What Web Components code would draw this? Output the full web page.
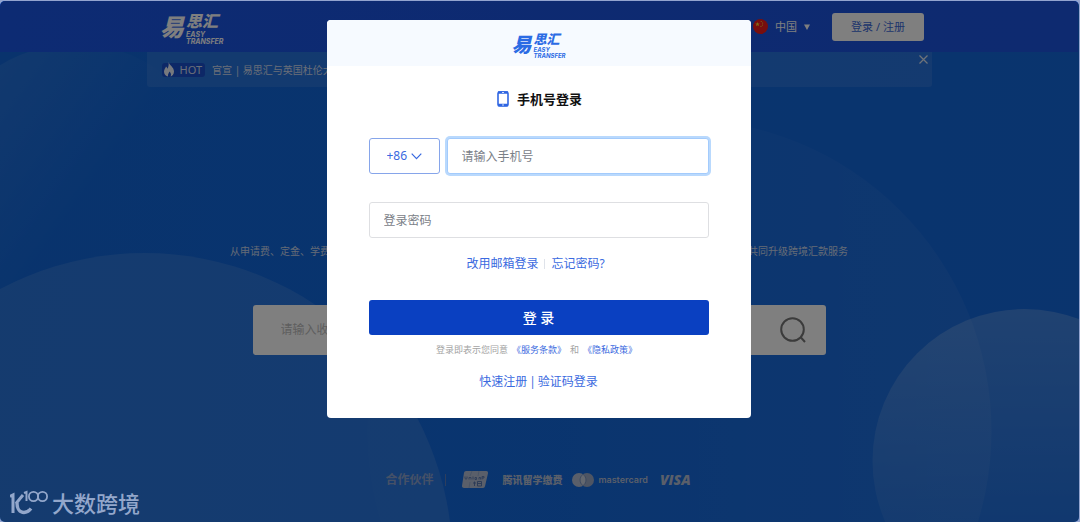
<!DOCTYPE html>
<html lang="zh-CN">
<head>
<meta charset="utf-8">
<meta name="viewport" content="width=device-width, initial-scale=1">
<title>易思汇 - 登录</title>
<style>
  html, body { margin: 0; min-height: 100%; }
  body {
    background: #93a4cf;
    font-family: "Noto Sans", "Noto Sans CJK SC", sans-serif;
    font-size: 12px;
    line-height: 16px;
  }
</style>
</head>
<body>
<et-app></et-app>

<script>
const define = (name, html, setup) => {
  const template = document.createElement('template');
  template.innerHTML = `<style>
    *, *::before, *::after { box-sizing: border-box; }
    a { color: inherit; text-decoration: none; }
    button, input, select { font: inherit; color: inherit; margin: 0; }
    svg { display: block; flex: none; }
  </style>` + html;
  customElements.define(name, class extends HTMLElement {
    constructor() {
      super();
      this.attachShadow({ mode: 'open' }).append(template.content.cloneNode(true));
    }
    connectedCallback() { if (setup) setup(this, this.shadowRoot); }
  });
};

/* Brand mark; --big, --mid and --tiny set its three text sizes */
define('et-logo', `
  <style>
    :host { display: block; color: var(--logo, #fff); }
    .mark { display: flex; align-items: center; gap: 2px; font-style: italic; font-weight: 900; }
    .big { font-size: var(--big, 24px); line-height: var(--h, 32px); }
    .col { display: flex; flex-direction: column; }
    .mid { font: italic 900 var(--mid, 16px)/var(--mid-line, 22px) "Noto Sans CJK SC", sans-serif; }
    .tiny { font: italic 700 var(--tiny, 7px)/var(--tiny, 7px) Inter, sans-serif; }
  </style>
  <div class="mark">
    <span class="big">易</span>
    <div class="col"><span class="mid">思汇</span><span class="tiny">EASY</span><span class="tiny">TRANSFER</span></div>
  </div>`);

define('et-header', `
  <style>
    :host { display: block; background: linear-gradient(90deg, #1b56e6, #1c54e0); color: #fff; }
    .bar { display: flex; align-items: center; height: 51px; max-width: 770px; margin: 0 auto; padding-left: 6px; }
    nav { margin-left: auto; display: flex; align-items: center; }
    .lang { display: flex; align-items: center; gap: 7px; font-size: 11px; margin-right: 22px; }
    select { appearance: none; border: 0; background: none; padding: 0; line-height: 16px; }
    button { width: 92px; height: 28px; border: 0; border-radius: 3px; background: #fff; color: #3a68d8; font-size: 11px; padding: 0; }
  </style>
  <div class="bar">
    <et-logo></et-logo>
    <nav>
      <div class="lang">
        <svg width="15" height="15" viewBox="0 0 15 15"><circle cx="7.500" cy="7.500" r="7.500" fill="#f01c1c"/><path d="M4.500 3l.6 1.500 1.600.1-1.200 1 .4 1.600-1.400-.9-1.400.9.4-1.600-1.200-1 1.600-.1z" fill="#ffd92e"/><g fill="#ffd92e"><circle cx="8.200" cy="2.500" r=".6"/><circle cx="9.600" cy="4" r=".6"/><circle cx="9.500" cy="6" r=".6"/><circle cx="8" cy="7.300" r=".6"/></g></svg>
        <select aria-label="国家"><option>中国</option></select>
        <svg width="6" height="6" viewBox="0 0 6 6"><path d="M0 .5h6L3 6z" fill="#fff"/></svg>
      </div>
      <button type="button">登录 / 注册</button>
    </nav>
  </div>`);

define('et-notice', `
  <style>
    :host { display: block; width: 100%; max-width: 785px; margin: 0 auto; background: rgba(255,255,255,.09); border-radius: 0 0 3px 3px; color: #d3dcef; font-size: 10px; }
    .row { display: flex; align-items: center; height: 35px; padding: 0 4px 0 15px; }
    .hot { display: flex; align-items: center; gap: 4px; height: 14px; padding: 0 3px 0 1px; background: #1b50cf; border-radius: 3px; font-size: 11px; margin-right: 7px; }
    button { margin-left: auto; align-self: flex-start; border: 0; background: none; padding: 3px 0 0; }
  </style>
  <div class="row">
    <span class="hot">
      <svg width="13" height="16" viewBox="0 0 13 16"><path d="M5.500 0c.8 3 5.500 5.200 5.500 9.500 0 3-2 4.500-3.500 5 1-1.700.5-3.500-1-5C6 11 4.500 12 5 14.500 3 14 1 12.500 1 9.800 1 7.500 2.500 6 3 4.500c.8.7 1.200 1.500 1.300 2.300C5.500 5 6 3 5.500 0z" fill="#eef2fc"/></svg>
      HOT
    </span>
    <a href="#news">官宣 | 易思汇与英国杜伦大学</a>
    <button type="button" aria-label="关闭"><svg width="9" height="9" viewBox="0 0 9 9"><path d="M.5.5l8 8m0-8l-8 8" stroke="#dfe6f3" stroke-width="1.200"/></svg></button>
  </div>`);

define('et-search', `
  <style>
    :host { display: block; width: 100%; max-width: 573px; margin: 0 auto; }
    form { display: flex; align-items: center; height: 50px; padding: 0 20px 0 28px; background: #fff; border-radius: 3px; }
    input { flex: 1; min-width: 0; border: 0; outline: 0; padding: 0; background: none; }
    input::placeholder { color: #bcbcbc; opacity: 1; }
    button { border: 0; background: none; padding: 0; }
  </style>
  <form>
    <input type="text" aria-label="收款方" placeholder="请输入收款学校">
    <button type="button" aria-label="搜索"><svg width="26" height="26" viewBox="0 0 26 26" fill="none" stroke="#767676" stroke-width="2"><circle cx="12.500" cy="12.500" r="11.300"/><path d="M20.500 20l4.500 5"/></svg></button>
  </form>`);

define('et-partners', `
  <style>
    :host { display: flex; align-items: center; justify-content: center; color: #b4bfd4; white-space: nowrap; }
    .title { color: #8ba2cf; font-weight: 700; }
    .line { width: 1px; height: 12px; background: #5b7dbd; margin: 0 16px 0 12px; }
    .tencent { font-size: 10px; font-weight: 900; margin: 0 10px 0 14px; }
    .mc { font: 600 9px/16px Inter, sans-serif; margin: 0 12px 0 4px; }
    .visa { font: italic 800 14px/16px "Open Sans", sans-serif; }
  </style>
  <span class="title">合作伙伴</span><span class="line"></span>
  <svg width="26" height="17" viewBox="0 0 26 17" role="img" aria-label="UnionPay"><path d="M4 0h20a2 2 0 0 1 2 2.200l-3 13A2.200 2.200 0 0 1 21 17H2a2 2 0 0 1-2-2.200l2-13A2.200 2.200 0 0 1 4 0z" fill="#b4bfd4"/><path d="M10 0L8 5M17 0l-1 5M8 11l-1 6" stroke="#8fa4cb" stroke-width=".8"/><path d="M3 5.500v2q1 1.500 2 0v-2m2 3v-2h2v2m2-3v3m2-2h1.500v2H13zm4 2v-2h1.500v2m1.500 0v-3h2v1.500h-2" stroke="#5272ac" stroke-width=".8" fill="none"/><path d="M11 12h3m-1.500-1.500V15m3-4.500h4v4.500h-4zm0 2h4" stroke="#5272ac" stroke-width=".9" fill="none"/></svg>
  <span class="tencent">腾讯留学缴费</span>
  <svg width="22" height="14" viewBox="0 0 22 14"><circle cx="7" cy="7" r="7" fill="#b4bfd4"/><circle cx="15" cy="7" r="7" fill="#9caac6"/><path d="M11 1.300a7 7 0 0 1 0 11.400 7 7 0 0 1 0-11.400z" fill="#c9d0de" stroke="#5477b4" stroke-width=".6"/></svg>
  <span class="mc">mastercard</span>
  <span class="visa">VISA</span>`);

define('et-field', `
  <style>
    :host { display: block; min-width: 0; }
    input { display: block; width: 100%; height: 36px; padding: 0 14px; border: 1px solid #dedfe2; border-radius: 3px; background: #fff; outline: 0; color: #495057; }
    input::placeholder { color: #7a8087; opacity: 1; }
    :host([active]) input { border-color: #a3cbfc; box-shadow: 0 0 0 2px #b9d9fd; }
  </style>
  <input>`, (host, root) => {
    const input = root.querySelector('input');
    input.type = host.getAttribute('type') || 'text';
    input.placeholder = host.getAttribute('hint');
    input.setAttribute('aria-label', host.getAttribute('hint'));
  });

define('et-dialog', `
  <style>
    :host { display: block; width: 424px; max-width: 100%; background: #fff; border-radius: 4px; overflow: hidden; color: #3a6ae0; }
    header { display: flex; align-items: center; justify-content: center; height: 46px; padding-top: 3px; background: #f6faff; }
    et-logo { --logo: #2b6be4; --big: 20px; --mid: 13px; --mid-line: 16px; --tiny: 6px; --h: 26px; }
    form { padding: 24px 42px 28px; }
    h1 { display: flex; align-items: center; justify-content: center; gap: 8px; margin: 0 0 30px; padding-left: 2px; color: #111; font-size: 13px; line-height: 18px; font-weight: 700; }
    .phone { display: flex; gap: 7px; margin-bottom: 28px; }
    .phone et-field { flex: 1; }
    .code { display: flex; align-items: center; justify-content: center; gap: 3px; width: 71px; border: 1px solid #86a5ea; border-radius: 3px; }
    select { appearance: none; border: 0; background: none; padding: 0; outline: 0; line-height: 16px; }
    .links { display: flex; align-items: center; justify-content: center; gap: 6px; margin: 18px 0 28px; padding-right: 6px; }
    .links i { width: 1px; height: 10px; background: #dfe3ea; }
    .go { display: block; width: 100%; height: 35px; border: 0; border-radius: 3px; background: #0a40c1; color: #fff; font-size: 14px; font-weight: 500; padding: 0; }
    .terms { display: flex; justify-content: center; gap: 4px; margin: 7px 0 16px; padding-right: 4px; font-size: 9px; color: #a3a3a3; }
    .terms a { color: #3a6ae0; }
    .more { display: flex; justify-content: center; gap: 2px; }
  </style>
  <header><et-logo></et-logo></header>
  <form>
    <h1><svg width="12" height="16" viewBox="0 0 12 16"><rect x="1" y="1" width="10" height="14" rx="1.500" fill="none" stroke="#2f65e2" stroke-width="1.600"/><path d="M1 1.500h10M1 14h10" stroke="#2f65e2" stroke-width="2.400"/><path d="M5 1.500h2M5 14h2" stroke="#fff" stroke-width=".8"/></svg>手机号登录</h1>
    <div class="phone">
      <div class="code">
        <select aria-label="国家区号"><option>+86</option></select>
        <svg width="11" height="7" viewBox="0 0 11 7"><path d="M.7.7l4.800 5 4.800-5" fill="none" stroke="#3a6ae0" stroke-width="1.200"/></svg>
      </div>
      <et-field active type="tel" hint="请输入手机号"></et-field>
    </div>
    <et-field type="password" hint="登录密码"></et-field>
    <div class="links"><a href="#email">改用邮箱登录</a><i></i><a href="#forgot">忘记密码?</a></div>
    <button class="go" type="button">登 录</button>
    <div class="terms"><span>登录即表示您同意</span><a href="#terms">《服务条款》</a><span>和</span><a href="#privacy">《隐私政策》</a></div>
    <div class="more"><a href="#register">快速注册</a><span>|</span><a href="#sms">验证码登录</a></div>
  </form>`);

define('et-watermark', `
  <style>
    :host { display: flex; align-items: center; gap: 4px; color: #93a7cb; font-size: 22px; line-height: 28px; font-weight: 500; }
  </style>
  <svg width="38" height="26" viewBox="0 0 38 26" fill="none" stroke="#93a7cb"><path d="M0 6.500l3-1.500v18M13 5l-7 8.500" stroke-width="3"/><path d="M7 13c0 6 3 9.500 7 9.500 3 0 5-1.500 7-4" stroke-width="3.400"/><path d="M14 3l2.500-1v9" stroke-width="2"/><circle cx="23.500" cy="6.500" r="4.600" stroke-width="1.800"/><circle cx="32.500" cy="6.500" r="4.600" stroke-width="1.800"/></svg>
  <span>大数跨境</span>`);

define('et-app', `
  <style>
    :host { display: block; padding: 1px 1px 0 0; }
    .page { position: relative; min-height: calc(100vh - 1px); border-radius: 5px; overflow: hidden; background: linear-gradient(100deg, #1267da, #1168de 45%, #1468dc); }
    .art { position: absolute; inset: 0; width: 100%; height: 100%; }
    .content { position: relative; display: flex; flex-direction: column; padding-right: 1px; }
    .tag { display: flex; justify-content: space-between; width: 100%; max-width: 618px; margin: 156px auto 46px; font-size: 10px; color: #c9d6ec; }
    et-partners { margin-top: 116px; padding: 0 2px 34px 0; }
    .veil { position: absolute; inset: 0; display: flex; justify-content: center; align-items: flex-start; padding: 19px 2px 0 0; background: rgba(0,0,0,.5); }
    et-watermark { position: absolute; left: 10px; bottom: 5px; }
  </style>
  <div class="page">
    <svg class="art" viewBox="0 0 1080 521" preserveAspectRatio="xMidYMid slice" aria-hidden="true">
      <defs>
        <linearGradient id="a" x1="0" y1=".1" x2=".7" y2=".6"><stop offset="0" stop-color="#fff" stop-opacity=".1"/><stop offset=".8" stop-color="#fff" stop-opacity="0"/></linearGradient>
        <linearGradient id="b" x1="0" y1="0" x2="1" y2="0"><stop offset=".3" stop-color="#fff" stop-opacity=".01"/><stop offset="1" stop-color="#fff" stop-opacity=".05"/></linearGradient>
        <linearGradient id="c" x1="0" y1="0" x2="0" y2="1"><stop offset="0" stop-color="#fff" stop-opacity=".19"/><stop offset=".8" stop-color="#fff" stop-opacity=".04"/></linearGradient>
      </defs>
      <circle cx="76" cy="188" r="145" fill="url(#a)"/>
      <circle cx="145" cy="560" r="308" fill="#fff" fill-opacity=".1"/>
      <circle cx="680" cy="430" r="312" fill="url(#b)"/>
      <circle cx="1025" cy="460" r="152" fill="url(#c)"/>
    </svg>
    <div class="content">
      <et-header></et-header>
      <et-notice></et-notice>
      <div class="tag"><span>从申请费、定金、学费</span><span>共同升级跨境汇款服务</span></div>
      <et-search></et-search>
      <et-partners></et-partners>
    </div>
    <div class="veil"><et-dialog role="dialog" aria-label="手机号登录"></et-dialog></div>
    <et-watermark></et-watermark>
  </div>`);
</script>
</body>
</html>
